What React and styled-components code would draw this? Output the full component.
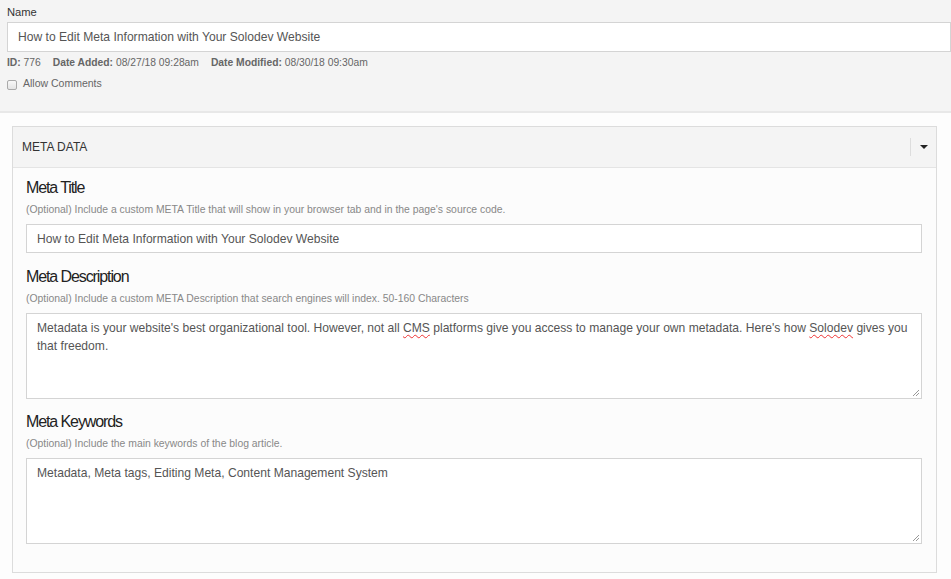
import React from 'react';
import styled, { createGlobalStyle } from 'styled-components';

const GlobalStyle = createGlobalStyle`
  html, body {
    margin: 0;
    padding: 0;
    background: #fdfdfd;
    font-family: Arial, "Liberation Sans", Helvetica, sans-serif;
    color: #333;
  }
  * { box-sizing: border-box; }
`;

const Page = styled.div`
  width: 951px;
  height: 579px;
  overflow: hidden;
  background: #fdfdfd;
`;

const TopSection = styled.div`
  background: #f4f4f4;
  padding: 4px 0 0 7px;
  height: 113px;
  border-bottom: 2px solid #e8e8e8;
`;

const FieldLabel = styled.div`
  font-size: 11.2px;
  line-height: 16px;
  color: #333;
  margin-bottom: 2px;
`;

const NameInput = styled.input`
  display: block;
  width: 944px;
  height: 30px;
  border: 1px solid #d4d4d4;
  background: #fff;
  padding: 0 10px;
  font-family: inherit;
  font-size: 12.1px;
  color: #555;
  outline: none;
`;

const InfoRow = styled.div`
  display: flex;
  gap: 12px;
  margin-top: 4px;
  font-size: 10.3px;
  line-height: 14px;
  color: #666;

  b {
    font-weight: bold;
  }
`;

const CheckRow = styled.label`
  display: flex;
  align-items: center;
  gap: 6px;
  margin-top: 6px;
  font-size: 10.5px;
  line-height: 14px;
  color: #666;
`;

const Box = styled.span`
  display: inline-block;
  width: 10px;
  height: 10px;
  border: 1px solid #aaa;
  border-radius: 2px;
  background: linear-gradient(#f8f8f8, #e4e4e4);
  margin-top: 3px;
`;

const BottomSection = styled.div`
  padding: 13px 14px 0 12px;
`;

const Panel = styled.div`
  border: 1px solid #dcdcdc;
  background: #fcfcfc;
  height: 447px;
`;

const PanelHeader = styled.div`
  display: flex;
  align-items: center;
  height: 41px;
  background: #f4f4f4;
  border-bottom: 1px solid #e4e4e4;
  padding-left: 9px;
`;

const PanelTitle = styled.div`
  flex: 1;
  font-size: 12px;
  color: #333;
  text-transform: uppercase;
`;

const Toggle = styled.div`
  display: flex;
  align-items: center;
  justify-content: center;
  width: 25px;
  height: 18px;
  border-left: 1px solid #ddd;
  margin-right: 1px;
`;

const Caret = styled.span`
  width: 0;
  height: 0;
  border-left: 4px solid transparent;
  border-right: 4px solid transparent;
  border-top: 4px solid #222;
  margin-left: 2px;
`;

const PanelBody = styled.div`
  padding: 9px 14px 0 13px;
`;

const Heading = styled.div`
  font-size: 16px;
  line-height: 22px;
  letter-spacing: -1.1px;
  color: #222;
  margin-top: ${(p) => p.$space || 0}px;
`;

const Help = styled.div`
  font-size: 10.4px;
  line-height: 14px;
  color: #888;
  margin-top: 4px;
  margin-bottom: 7px;
`;

const TextInput = styled.input`
  display: block;
  width: 100%;
  height: 29px;
  border: 1px solid #d4d4d4;
  background: #fff;
  padding: 0 10px;
  font-family: inherit;
  font-size: 12.1px;
  color: #555;
  outline: none;
`;

const TextArea = styled.div`
  position: relative;
  overflow: hidden;
  width: 100%;
  height: 86px;
  border: 1px solid #d4d4d4;
  background: #fff;
  padding: 5px 10px;
  font-size: 12.1px;
  line-height: 18px;
  color: #555;
`;

const Misspelled = styled.span`
  text-decoration: underline wavy #e33;
  text-decoration-thickness: 1px;
  text-underline-offset: 2px;
`;

const Grip = styled.svg`
  position: absolute;
  right: 1px;
  bottom: 1px;
`;

const ResizeGrip = () => (
  <Grip width="8" height="8" viewBox="0 0 8 8">
    <path d="M7 1 L1 7 M7 4 L4 7" stroke="#999" strokeWidth="1" />
  </Grip>
);

const App = () => {
  return (
    <Page>
      <GlobalStyle />
      <TopSection>
        <FieldLabel>Name</FieldLabel>
        <NameInput defaultValue="How to Edit Meta Information with Your Solodev Website" />
        <InfoRow>
          <span><b>ID:</b> 776</span>
          <span><b>Date Added:</b> 08/27/18 09:28am</span>
          <span><b>Date Modified:</b> 08/30/18 09:30am</span>
        </InfoRow>
        <CheckRow>
          <Box />
          <span>Allow Comments</span>
        </CheckRow>
      </TopSection>
      <BottomSection>
        <Panel>
          <PanelHeader>
            <PanelTitle>Meta Data</PanelTitle>
            <Toggle>
              <Caret />
            </Toggle>
          </PanelHeader>
          <PanelBody>
            <Heading>Meta Title</Heading>
            <Help>(Optional) Include a custom META Title that will show in your browser tab and in the page's source code.</Help>
            <TextInput defaultValue="How to Edit Meta Information with Your Solodev Website" />

            <Heading $space={13}>Meta Description</Heading>
            <Help>(Optional) Include a custom META Description that search engines will index. 50-160 Characters</Help>
            <TextArea>
              Metadata is your website's best organizational tool. However, not all <Misspelled>CMS</Misspelled> platforms give you access to manage your own metadata. Here's how <Misspelled>Solodev</Misspelled> gives you that freedom.
              <ResizeGrip />
            </TextArea>

            <Heading $space={12}>Meta Keywords</Heading>
            <Help>(Optional) Include the main keywords of the blog article.</Help>
            <TextArea>
              Metadata, Meta tags, Editing Meta, Content Management System
              <ResizeGrip />
            </TextArea>
          </PanelBody>
        </Panel>
      </BottomSection>
    </Page>
  );
};

export default App;
